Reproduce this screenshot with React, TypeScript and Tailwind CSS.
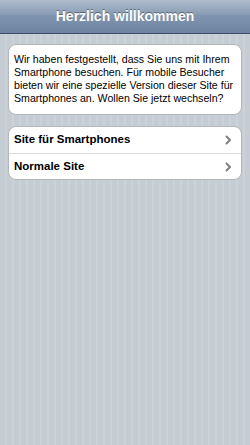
import React from "react";

function Chevron() {
  return (
    <svg width="7" height="10" viewBox="0 0 7 10" className="shrink-0">
      <path d="M1.5 1.5 L5 5 L1.5 8.5" fill="none" stroke="#7f7f7f" strokeWidth="2" strokeLinecap="round" strokeLinejoin="round" />
    </svg>
  );
}

export default function App() {
  const links = ["Site für Smartphones", "Normale Site"];

  return (
    <div className="min-h-[445px] w-[250px] font-['Liberation_Sans',Arial,sans-serif] bg-[repeating-linear-gradient(90deg,#c5ccd4_0px,#c5ccd4_5px,#cbd2d8_5px,#cbd2d8_7px)]">
      {/* Header */}
      <div className="h-[34px] flex items-center justify-center border-b border-[#3b4a5e] bg-[linear-gradient(#b0bccd,#889bb3_45%,#8195af_45%,#6d84a2)]">
        <h1 className="text-[14px] font-bold text-white [text-shadow:0_-1px_0_rgba(0,0,0,0.4)]">
          Herzlich willkommen
        </h1>
      </div>

      {/* Content */}
      <div className="px-2 pt-[10px] flex flex-col gap-[11px]">
        <div className="bg-white rounded-lg border border-[#b4b7bb] pl-[5px] pr-[1px] pt-[8px] pb-[9px]">
          <p className="text-[10.6px] leading-[13px] text-black">
            Wir haben festgestellt, dass Sie uns mit Ihrem Smartphone besuchen. Für mobile Besucher bieten wir eine spezielle Version dieser Site für Smartphones an. Wollen Sie jetzt wechseln?
          </p>
        </div>

        <ul className="bg-white rounded-lg border border-[#b4b7bb] overflow-hidden">
          {links.map((label, i) => (
            <li
              key={label}
              className={`h-[26px] flex items-center justify-between pl-[5px] pr-[9px] ${i > 0 ? "border-t border-[#d9d9d9]" : ""}`}
            >
              <span className="text-[11.5px] font-bold text-black">{label}</span>
              <Chevron />
            </li>
          ))}
        </ul>
      </div>
    </div>
  );
}
